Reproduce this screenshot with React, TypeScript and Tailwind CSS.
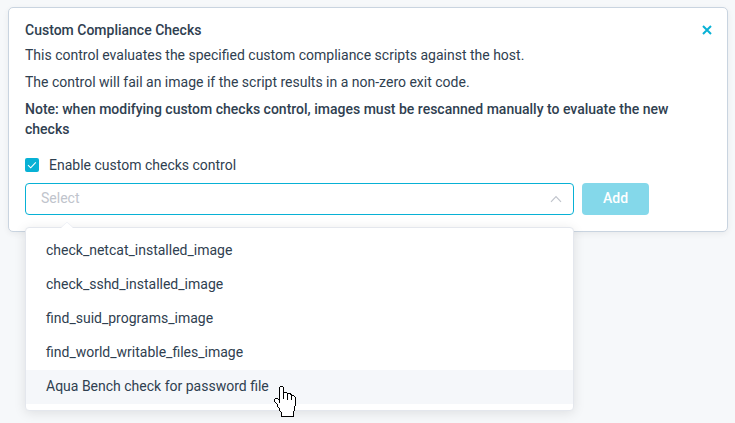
const options = [
  'check_netcat_installed_image',
  'check_sshd_installed_image',
  'find_suid_programs_image',
  'find_world_writable_files_image',
  'Aqua Bench check for password file',
];

function HandCursor() {
  return (
    <svg className="absolute left-[248px] top-[157px] h-[32px] w-[23px]" viewBox="0 0 23 32" shapeRendering="crispEdges">
      <path
        d="M6.5 1.5H8.5L9.5 2.5V7.5H12.5L13.5 8.5H16.5L17.5 10.5H19.5L21.5 12.5V20.5L20.5 21.5V25.5L19.5 26.5V31.5H7.5V27.5L5.5 25.5V23.5L3.5 21.5V19.5L0.5 16.5V14.5L1.5 13.5H3.5L5.5 15.5V2.5Z"
        fill="#fff"
        stroke="#000"
        strokeWidth="1"
      />
      <path d="M5.5 15V18M9.5 7V14M13.5 8V15M17.5 10V15" stroke="#000" strokeWidth="1" fill="none" />
    </svg>
  );
}

function Dropdown() {
  return (
    <div className="absolute left-0 top-[44px] z-10 h-[184px] w-[549px] rounded-[4px] border border-[#e4e7ed] bg-white py-[6px] shadow-[0_2px_12px_0_rgba(0,0,0,0.1)]">
      <svg className="absolute left-[35px] top-[-6px] h-[7px] w-[12px]" viewBox="0 0 12 7">
        <path d="M0 6L6 0L12 6V7H0Z" fill="#fff" />
        <path d="M0 5.5L6 0.2L12 5.5" fill="none" stroke="#ebeef5" strokeWidth="0.8" />
      </svg>
      <ul>
        {options.map((o, i) => (
          <li key={o} className={`h-[34px] px-5 leading-[32px] ${i === 4 ? 'bg-[#f5f7fa]' : ''}`}>
            {o}
          </li>
        ))}
      </ul>
      <HandCursor />
    </div>
  );
}

export default function App() {
  return (
    <div className="h-[423px] w-[735px] overflow-hidden bg-[#f6f8fa] pl-2 pt-[7px] font-[Roboto,sans-serif] text-[14px] text-[#2f4050]">
      <section className="h-[225px] w-[720px] rounded-[5px] border border-[#c9d4e0] bg-white px-4 pt-[12px] shadow-[0_2px_6px_0_rgba(0,0,0,0.06)]">
        <header className="flex h-5 items-center justify-between">
          <h1 className="font-medium leading-5">Custom Compliance Checks</h1>
          <svg className="mr-[-1px] h-[10px] w-[10px]" viewBox="0 0 10 10">
            <path d="M1 1L9 9M9 1L1 9" stroke="#08b1d5" strokeWidth="2" />
          </svg>
        </header>
        <p className="mt-[5px] leading-5">This control evaluates the specified custom compliance scripts against the host.</p>
        <p className="mt-[7px] leading-5">The control will fail an image if the script results in a non-zero exit code.</p>
        <p className="mt-[7px] w-[660px] font-medium leading-5">
          Note: when modifying custom checks control, images must be rescanned manually to evaluate the new checks
        </p>
        <label className="mt-4 flex h-5 items-center">
          <span className="flex h-[14px] w-[14px] items-center justify-center rounded-[2px] bg-[#08b1d5]">
            <svg className="h-[14px] w-[14px]" viewBox="0 0 14 14">
              <path d="M3 7.2L5.7 9.8L10.8 4.4" fill="none" stroke="#fff" strokeWidth="1.1" />
            </svg>
          </span>
          <span className="ml-[10px] leading-5">Enable custom checks control</span>
        </label>
        <div className="relative mt-2 flex gap-2">
          <div className="flex h-8 w-[549px] items-center justify-between rounded-[4px] border border-[#08b1d5] pl-[15px] pr-[11px]">
            <span className="relative top-[-1px] leading-5 text-[#c0c4cc]">Select</span>
            <svg className="h-[8px] w-[12px]" viewBox="0 0 12 8">
              <path d="M1 6.8L6 1.7L11 6.8" fill="none" stroke="#c0c4cc" strokeWidth="1.2" />
            </svg>
          </div>
          <button className="h-8 w-[67px] rounded-[4px] bg-[#84d8ea] pb-[2px] font-medium text-white">Add</button>
          <Dropdown />
        </div>
      </section>
    </div>
  );
}
